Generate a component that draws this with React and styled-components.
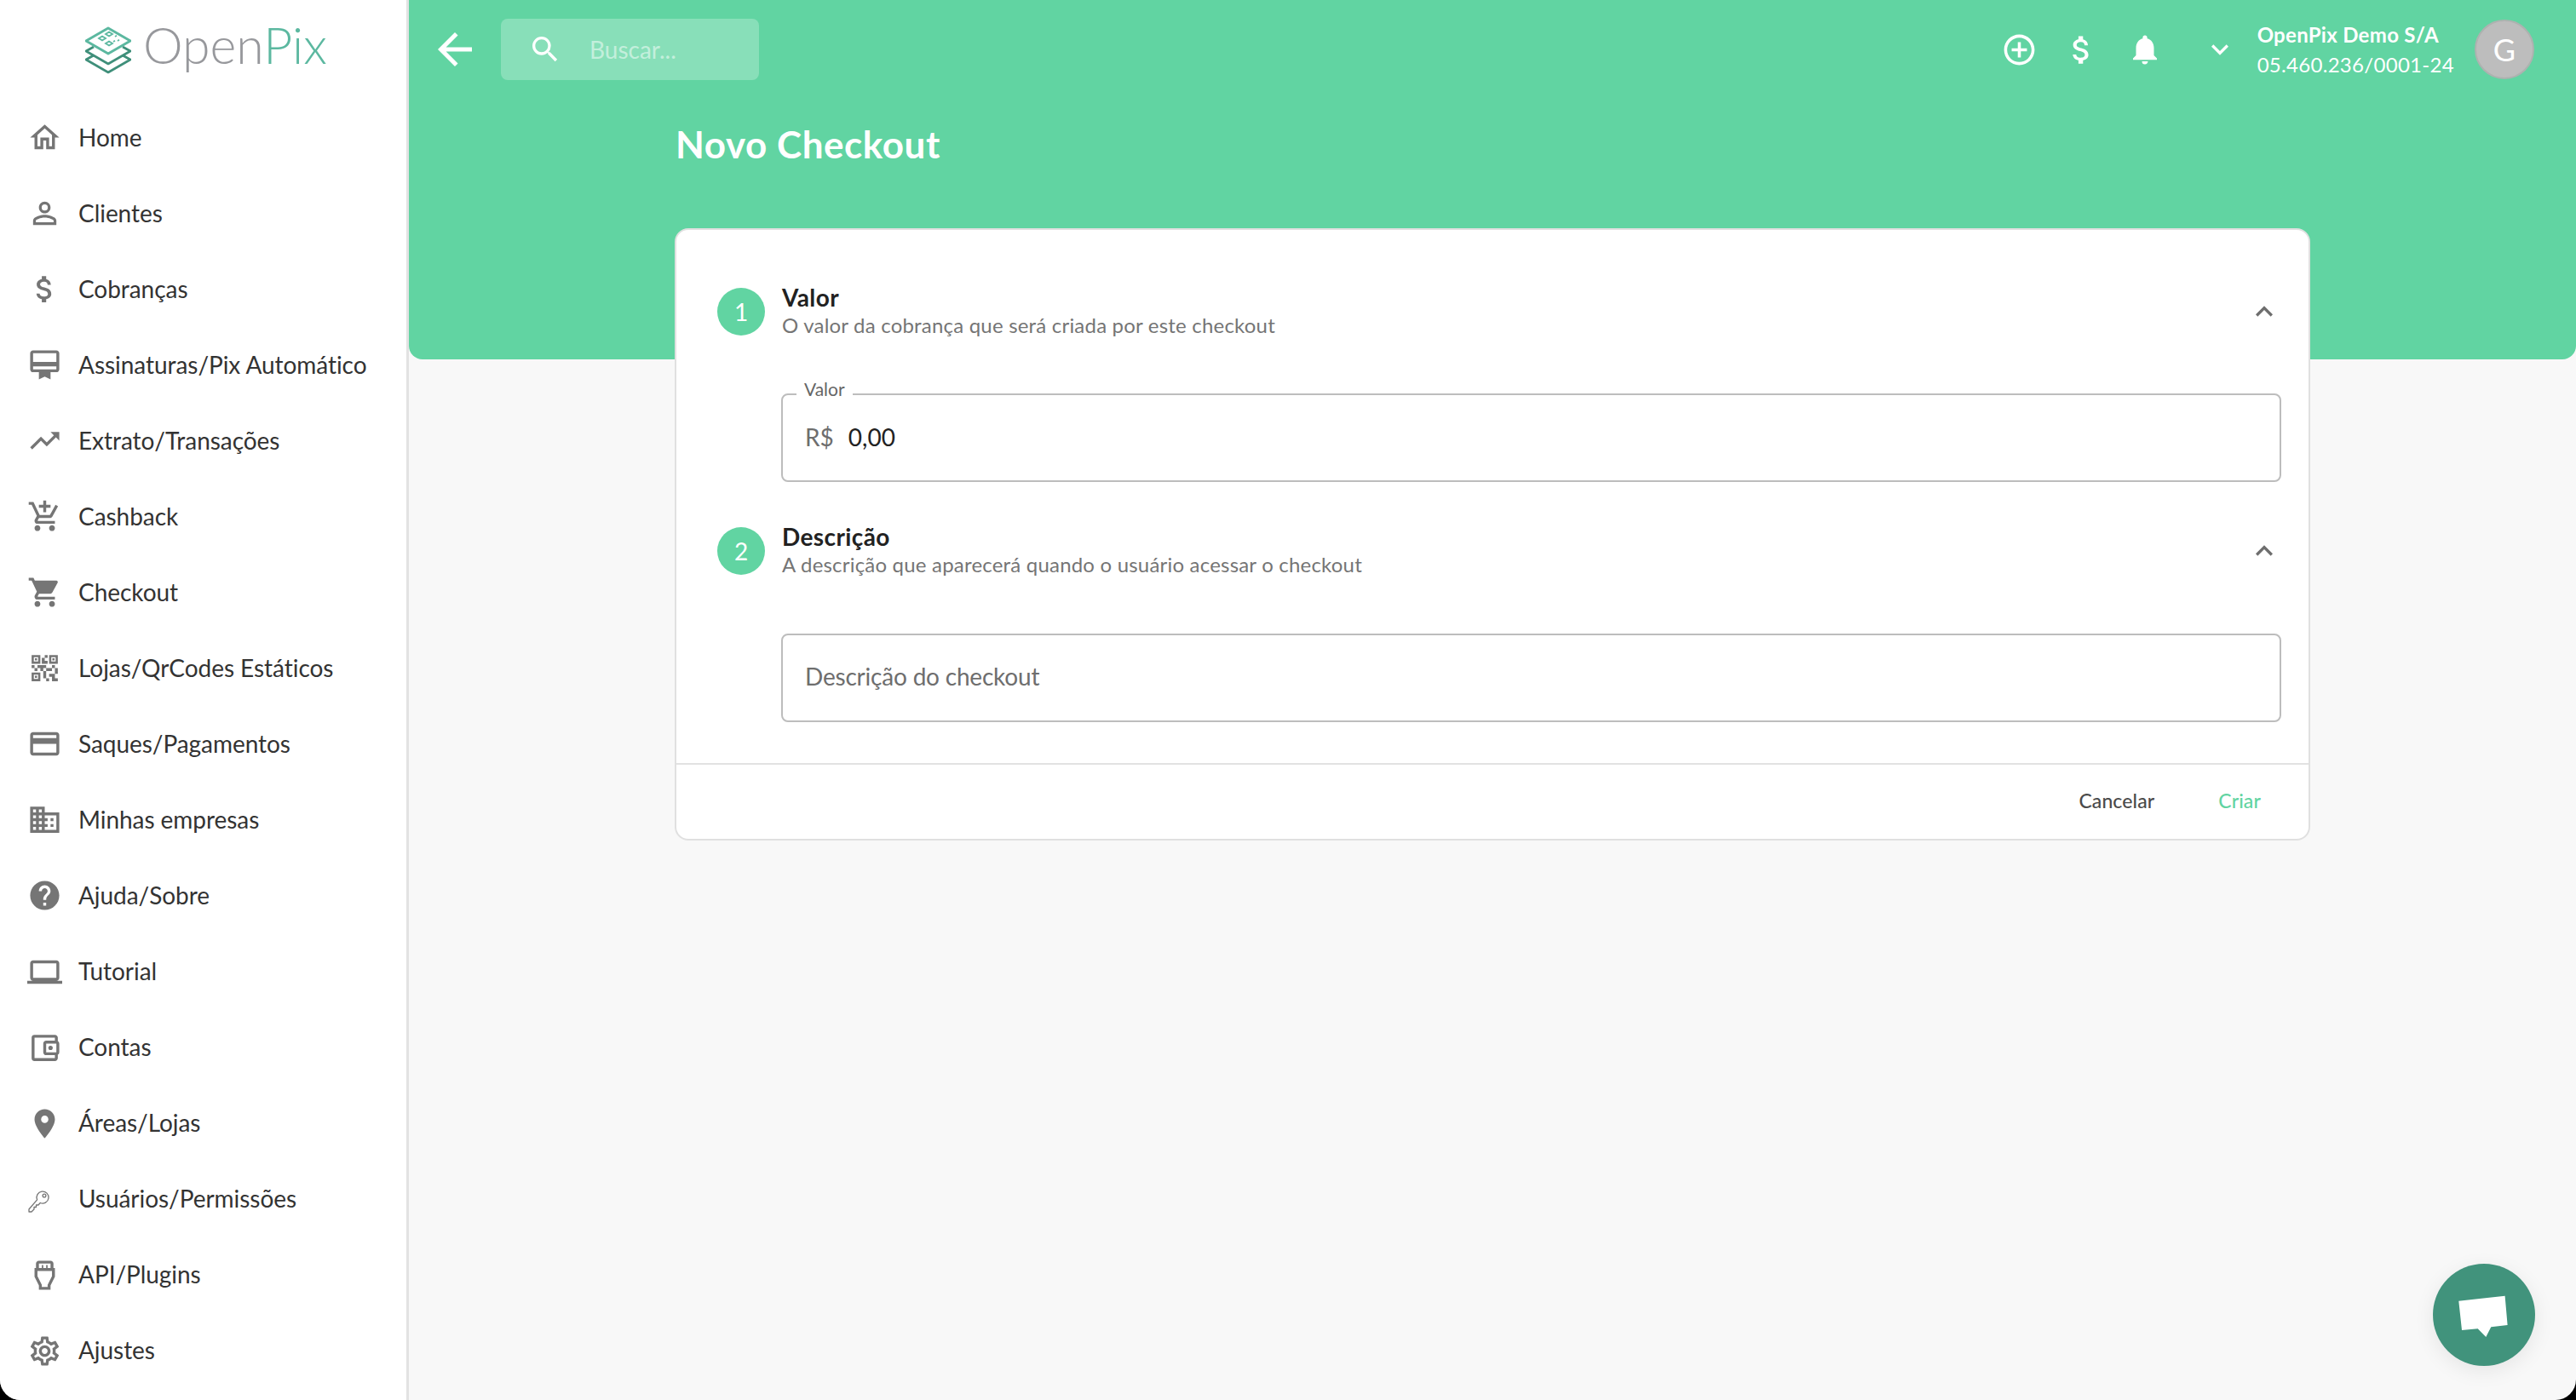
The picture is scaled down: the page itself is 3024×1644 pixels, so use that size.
import styled, { createGlobalStyle } from "styled-components"
import {
  MdOutlineHome, MdPersonOutline, MdAttachMoney, MdCardMembership, MdTrendingUp,
  MdAddShoppingCart, MdShoppingCart, MdQrCode2, MdCreditCard, MdDomain, MdHelp,
  MdOutlineLaptop, MdOutlineAccountBalanceWallet, MdPlace, MdOutlineSettingsInputHdmi,
  MdOutlineSettings, MdArrowBack, MdSearch, MdAddCircleOutline, MdNotifications,
  MdExpandMore, MdExpandLess,
} from "react-icons/md"

const GREEN = "#61d4a2"
const FONT = `Lato, "Noto Sans", sans-serif`

const GlobalStyle = createGlobalStyle`
  html, body {
    margin: 0;
    padding: 0;
    background: #000;
  }
  * {
    box-sizing: border-box;
  }
  body {
    font-family: ${FONT};
  }
`

const Screen = styled.div`
  position: relative;
  width: 3024px;
  height: 1644px;
  display: flex;
  overflow: hidden;
  background: #f8f8f8;
  border-radius: 0 0 24px 24px;
`

const Sidebar = styled.aside`
  width: 480px;
  flex: none;
  background: #fff;
  border-right: 3px solid #e2e2e2;
`

const LogoRow = styled.div`
  height: 117px;
  display: flex;
  align-items: flex-start;
  padding: 31px 0 0 100px;
  gap: 14px;
`

const LogoText = styled.div`
  font-size: 59px;
  font-weight: 300;
  line-height: 44px;
  color: #97989c;
  span {
    color: #5cb8a0;
  }
`

const NavList = styled.nav`
  display: flex;
  flex-direction: column;
`

const NavItem = styled.div`
  height: 89.06px;
  display: flex;
  align-items: center;
  padding-left: 32px;
  gap: 19px;
  font-size: 28px;
  letter-spacing: -0.05px;
  color: #333;
  svg {
    width: 41px;
    height: 41px;
    flex: none;
    color: #757575;
  }
`

const NavLabel = styled.span`
  padding-bottom: 2px;
`

const Main = styled.main`
  flex: 1;
  display: flex;
  flex-direction: column;
`

const Hero = styled.header`
  height: 422px;
  flex: none;
  background: ${GREEN};
  border-radius: 0 0 16px 16px;
`

const TopBar = styled.div`
  height: 116px;
  display: flex;
  align-items: center;
  padding: 0 49px 0 24px;
  color: #fff;
`

const BackIcon = styled(MdArrowBack)`
  width: 60px;
  height: 60px;
  margin-right: 24px;
`

const SearchBox = styled.div`
  width: 303px;
  height: 72px;
  display: flex;
  align-items: center;
  gap: 32px;
  padding: 0 0 1px 32px;
  background: rgba(255, 255, 255, 0.25);
  border-radius: 8px;
  font-size: 28px;
  color: rgba(255, 255, 255, 0.5);
  svg {
    width: 40px;
    height: 40px;
    color: #fff;
  }
`

const TopActions = styled.div`
  margin-left: auto;
  display: flex;
  align-items: center;
`

const TopIcon = styled.span`
  width: ${(p) => p.$slot}px;
  margin-left: ${(p) => p.$left || 0}px;
  display: flex;
  justify-content: center;
  svg {
    width: ${(p) => p.$size}px;
    height: ${(p) => p.$size}px;
  }
`

const Company = styled.div`
  margin-left: 24px;
  font-size: 24px;
  line-height: 35px;
  letter-spacing: 0.3px;
  b {
    display: block;
    font-weight: 700;
  }
`

const Avatar = styled.div`
  width: 70px;
  height: 70px;
  margin-left: 24px;
  display: flex;
  align-items: center;
  justify-content: center;
  border-radius: 50%;
  background: #bdbdbd;
  border: 2px solid #aeb2b0;
  font-size: 36px;
`

const PageTitle = styled.h1`
  margin: 24px 0 0 313px;
  font-size: 44px;
  font-weight: 700;
  line-height: 58px;
  letter-spacing: 0.55px;
  color: #fff;
`

const Card = styled.section`
  position: relative;
  width: 1920px;
  height: 719px;
  margin: -154px 0 0 312px;
  padding-top: 68px;
  background: #fff;
  border: 2px solid #e0e0e0;
  border-radius: 16px;
  display: flex;
  flex-direction: column;
`

const StepHeader = styled.div`
  height: 56px;
  flex: none;
  display: flex;
  align-items: center;
  padding: 0 32px 0 48px;
  margin-top: ${(p) => p.$top || 0}px;
  svg {
    width: 40px;
    height: 40px;
    margin-left: auto;
    color: #6e6e6e;
  }
`

const StepNumber = styled.div`
  width: 56px;
  height: 56px;
  flex: none;
  display: flex;
  align-items: center;
  justify-content: center;
  margin-right: 20px;
  border-radius: 50%;
  background: ${GREEN};
  color: #fff;
  font-size: 28px;
`

const StepText = styled.div`
  display: flex;
  flex-direction: column;
  padding-bottom: 3px;
`

const StepTitle = styled.div`
  font-size: 28px;
  font-weight: 700;
  line-height: 33px;
  letter-spacing: 0.4px;
  color: #222;
`

const StepHint = styled.div`
  font-size: 24px;
  line-height: 31px;
  color: #757575;
  letter-spacing: 0.2px;
`

const Field = styled.div`
  position: relative;
  width: 1761px;
  height: 104px;
  flex: none;
  margin: ${(p) => p.$top}px 0 0 123px;
  padding: 0 0 2px 26px;
  display: flex;
  align-items: center;
  gap: 17px;
  border: 2px solid #bdbdbd;
  border-radius: 8px;
  font-size: 28px;
`

const FieldLegend = styled.span`
  position: absolute;
  left: 16px;
  top: -20px;
  padding: 0 9px;
  background: #fff;
  font-size: 21px;
  line-height: 26px;
  color: #666;
`

const Prefix = styled.span`
  color: #6e6e6e;
`

const Value = styled.span`
  color: #222;
`

const Placeholder = styled.span`
  padding-bottom: 3px;
  color: #6e6e6e;
  letter-spacing: -0.2px;
`

const CardFooter = styled.div`
  margin-top: auto;
  height: 89px;
  flex: none;
  display: flex;
  align-items: center;
  justify-content: flex-end;
  gap: 75px;
  padding: 0 56px 3px 0;
  border-top: 2px solid #e2e2e2;
`

const FooterButton = styled.button`
  padding: 0;
  border: 0;
  background: none;
  font-family: ${FONT};
  font-size: 23px;
  font-weight: 500;
  letter-spacing: 0.1px;
  color: ${(p) => (p.$primary ? GREEN : "#4a4a4a")};
`

const ChatButton = styled.div`
  position: absolute;
  right: 48px;
  bottom: 40px;
  width: 120px;
  height: 120px;
  display: flex;
  align-items: center;
  justify-content: center;
  border-radius: 50%;
  background: #41937c;
  box-shadow: 0 6px 24px rgba(0, 0, 0, 0.08);
  svg {
    width: 120px;
    height: 120px;
  }
`

const LogoMark = () => (
  <svg width="54" height="56" viewBox="0 0 54 56" fill="none">
    <g stroke="#3f8f7a" strokeWidth="2.6" strokeLinejoin="round">
      <path d="M10 34 L1 39 L27 54 L53 39 L44 34" />
      <path d="M10 24 L1 29 L27 44 L53 29 L44 24" />
    </g>
    <path d="M27 2 L53 17 L27 32 L1 17 Z" fill="#fff" stroke="#5cb8a0" strokeWidth="3" strokeLinejoin="round" />
    <g stroke="#5cb8a0" strokeWidth="1.8">
      <path d="M16 14 l4-2.4 4 2.4-4 2.4z" />
      <path d="M24 9 l4-2.4 4 2.4-4 2.4z" />
      <path d="M24 20 l4-2.4 4 2.4-4 2.4z" />
      <path d="M35 12 l2-1.2M38 17 l2-1.2M33 18 l2-1.2" />
    </g>
  </svg>
)

const KeyIcon = () => (
  <svg viewBox="0 0 41 41" fill="none" stroke="#757575" strokeWidth="1.3" strokeLinejoin="round">
    <path d="M11.6 20.8 A7 7 0 1 1 15.3 24.5 L13 27 L10.5 27 L10.5 29.5 L8 29.5 L8 32 L5 35 L2 35 L2 32 Z" />
    <circle cx="20" cy="16" r="1.9" />
  </svg>
)

const navItems = [
  ["Home", MdOutlineHome],
  ["Clientes", MdPersonOutline],
  ["Cobranças", MdAttachMoney],
  ["Assinaturas/Pix Automático", MdCardMembership],
  ["Extrato/Transações", MdTrendingUp],
  ["Cashback", MdAddShoppingCart],
  ["Checkout", MdShoppingCart],
  ["Lojas/QrCodes Estáticos", MdQrCode2],
  ["Saques/Pagamentos", MdCreditCard],
  ["Minhas empresas", MdDomain],
  ["Ajuda/Sobre", MdHelp],
  ["Tutorial", MdOutlineLaptop],
  ["Contas", MdOutlineAccountBalanceWallet],
  ["Áreas/Lojas", MdPlace],
  ["Usuários/Permissões", KeyIcon],
  ["API/Plugins", MdOutlineSettingsInputHdmi],
  ["Ajustes", MdOutlineSettings],
]

const App = () => {
  return (
    <Screen>
      <GlobalStyle />
      <Sidebar>
        <LogoRow>
          <LogoMark />
          <LogoText>
            Open<span>Pix</span>
          </LogoText>
        </LogoRow>
        <NavList>
          {navItems.map(([label, Icon]) => (
            <NavItem key={label}>
              <Icon />
              <NavLabel>{label}</NavLabel>
            </NavItem>
          ))}
        </NavList>
      </Sidebar>
      <Main>
        <Hero>
          <TopBar>
            <BackIcon />
            <SearchBox>
              <MdSearch />
              Buscar...
            </SearchBox>
            <TopActions>
              <TopIcon $slot={74} $size={43}><MdAddCircleOutline /></TopIcon>
              <TopIcon $slot={72} $size={43}><MdAttachMoney /></TopIcon>
              <TopIcon $slot={76} $size={42}><MdNotifications /></TopIcon>
              <TopIcon $slot={40} $left={30} $size={40}><MdExpandMore /></TopIcon>
              <Company>
                <b>OpenPix Demo S/A</b>
                05.460.236/0001-24
              </Company>
              <Avatar>G</Avatar>
            </TopActions>
          </TopBar>
          <PageTitle>Novo Checkout</PageTitle>
        </Hero>
        <Card>
          <StepHeader>
            <StepNumber>1</StepNumber>
            <StepText>
              <StepTitle>Valor</StepTitle>
              <StepHint>O valor da cobrança que será criada por este checkout</StepHint>
            </StepText>
            <MdExpandLess />
          </StepHeader>
          <Field $top={68}>
            <FieldLegend>Valor</FieldLegend>
            <Prefix>R$</Prefix>
            <Value>0,00</Value>
          </Field>
          <StepHeader $top={53}>
            <StepNumber>2</StepNumber>
            <StepText>
              <StepTitle>Descrição</StepTitle>
              <StepHint>A descrição que aparecerá quando o usuário acessar o checkout</StepHint>
            </StepText>
            <MdExpandLess />
          </StepHeader>
          <Field $top={69}>
            <Placeholder>Descrição do checkout</Placeholder>
          </Field>
          <CardFooter>
            <FooterButton>Cancelar</FooterButton>
            <FooterButton $primary>Criar</FooterButton>
          </CardFooter>
        </Card>
      </Main>
      <ChatButton>
        <svg viewBox="0 0 120 120">
          <path d="M30.3 43.7 L84.6 37.7 L87.6 72 L68.3 74.3 L62.3 86 L52.7 76.3 L34 78 Z" fill="#fff" />
        </svg>
      </ChatButton>
    </Screen>
  )
}

export default App
